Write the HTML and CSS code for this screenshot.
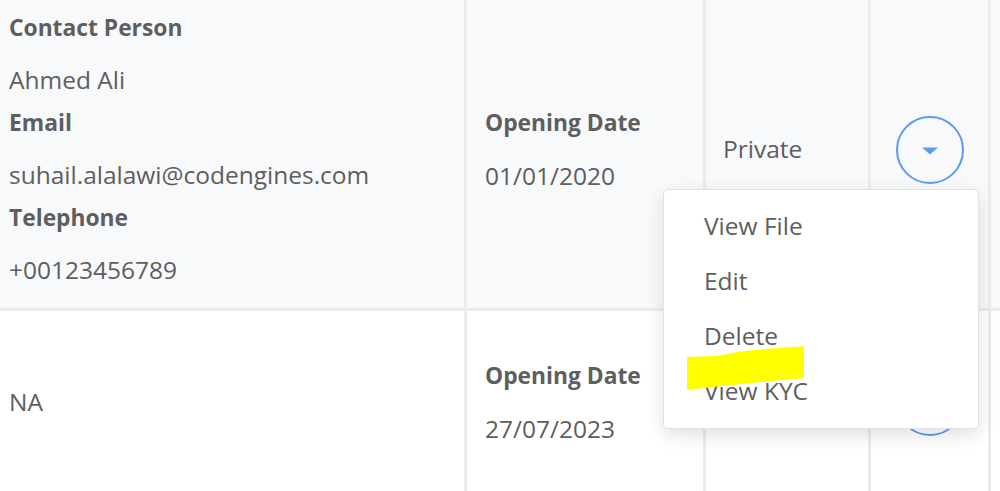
FILE: index.html
```html
<!DOCTYPE html>
<html lang="en">
<head>
<meta charset="utf-8">
<title>Accounts</title>
<link rel="stylesheet" href="styles.css">
</head>
<body>
<div class="table">
  <div class="row row-alt">
    <div class="cell c1">
      <div class="label">Contact Person</div>
      <div class="value">Ahmed Ali</div>
      <div class="label">Email</div>
      <div class="value">suhail.alalawi@codengines.com</div>
      <div class="label">Telephone</div>
      <div class="value">+00123456789</div>
    </div>
    <div class="cell c2 mid">
      <div class="label">Opening Date</div>
      <div class="value">01/01/2020</div>
    </div>
    <div class="cell c3 mid">
      <div class="value">Private</div>
    </div>
    <div class="cell c4 mid center">
      <button class="toggle" type="button" aria-label="Actions">
        <svg width="16" height="8" viewBox="0 0 16 8"><path d="M0 0.5 L16 0.5 L8 7.5 Z" fill="#5b9cf0"/></svg>
      </button>
    </div>
    <div class="cell c5"></div>
  </div>
  <div class="row">
    <div class="cell c1 mid">
      <div class="value">NA</div>
    </div>
    <div class="cell c2 mid">
      <div class="label">Opening Date</div>
      <div class="value">27/07/2023</div>
    </div>
    <div class="cell c3 mid">
      <div class="value">Private</div>
    </div>
    <div class="cell c4 mid center">
      <button class="toggle" type="button" aria-label="Actions">
        <svg width="16" height="8" viewBox="0 0 16 8"><path d="M0 0.5 L16 0.5 L8 7.5 Z" fill="#5b9cf0"/></svg>
      </button>
    </div>
    <div class="cell c5"></div>
  </div>
</div>

<ul class="menu">
  <li class="menu-item">View File</li>
  <li class="menu-item">Edit</li>
  <li class="menu-item">Delete</li>
  <li class="menu-item">View KYC</li>
</ul>

<svg class="marker" width="118" height="46" viewBox="0 0 118 46">
  <polygon points="0,12 30,11 50,7 78,4 117,1 117,33 75,37 35,41 0,45" fill="#ffff00"/>
</svg>
</body>
</html>
```

FILE: styles.css
```css
html, body {
  margin: 0;
  padding: 0;
}
body {
  width: 1000px;
  height: 491px;
  overflow: hidden;
  position: relative;
  background: #ffffff;
  font-family: "Open Sans", "Noto Sans", sans-serif;
  color: #5e5e5e;
}
.table {
  display: flex;
  flex-direction: column;
}
.row {
  display: flex;
  border-bottom: 3px solid #ececec;
  background: #ffffff;
}
.row-alt {
  background: #f8f9fb;
}
.cell {
  border-right: 3px solid #ececec;
  box-sizing: border-box;
}
.mid {
  display: flex;
  flex-direction: column;
  justify-content: center;
  padding-bottom: 11px;
}
.center {
  align-items: center;
}
.c1 {
  width: 467px;
  padding-left: 9px;
}
.row-alt .c1 {
  padding-top: 12px;
  padding-bottom: 22px;
}
.row:not(.row-alt) {
  height: 182px;
}
.row:not(.row-alt) .c1 {
  padding-bottom: 0;
}
.c2 {
  width: 239px;
  padding-left: 18px;
}
.c2 .label {
  margin-bottom: 21px;
}
.row-alt .c2 {
  padding-bottom: 9px;
}
.row:not(.row-alt) .c2 {
  padding-bottom: 0;
}
.c3 {
  width: 165px;
  padding-left: 17px;
}
.c4 {
  width: 120px;
}
.row-alt .c4 {
  padding-bottom: 9px;
}
.row:not(.row-alt) .c4 {
  padding-bottom: 0;
}
.c5 {
  flex: 1;
  border-right: none;
}
.label {
  font-size: 22.8px;
  font-weight: 700;
  line-height: 32px;
  margin-bottom: 20px;
  white-space: nowrap;
}
.value {
  font-size: 24.5px;
  line-height: 32px;
  margin-bottom: 11px;
  white-space: nowrap;
}
.value:last-child {
  margin-bottom: 0;
}
.toggle {
  width: 68px;
  height: 68px;
  border: 2px solid #5b9cf0;
  border-radius: 50%;
  background: transparent;
  padding: 0;
  display: flex;
  align-items: center;
  justify-content: center;
  padding-top: 3px;
  box-sizing: border-box;
}
.toggle svg {
  display: block;
}
.menu {
  position: absolute;
  left: 663px;
  top: 189px;
  width: 316px;
  height: 240px;
  box-sizing: border-box;
  margin: 0;
  padding: 8px 0 0 0;
  list-style: none;
  background: #ffffff;
  border: 1px solid #e2e2e2;
  border-radius: 5px;
  box-shadow: 0 6px 18px rgba(0, 0, 0, 0.12);
}
.menu-item {
  height: 55px;
  line-height: 55px;
  padding-left: 40px;
  font-size: 24.5px;
  color: #5e5e5e;
}
.marker {
  position: absolute;
  left: 687px;
  top: 345px;
  display: block;
}
```
